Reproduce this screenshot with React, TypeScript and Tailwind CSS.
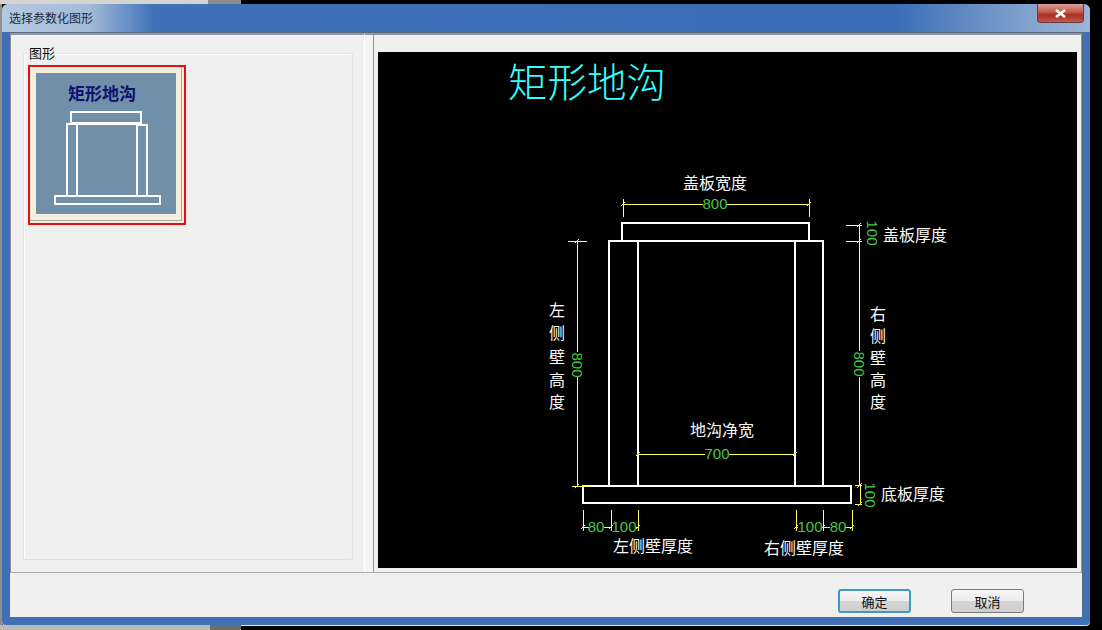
const cjk = "[font-family:'Noto_Sans_CJK_SC','Liberation_Sans',sans-serif]";
const label = "fill-white text-[16px] opacity-[.99] [font-family:'Noto_Sans_CJK_SC',sans-serif]";
const digit = "fill-[#45c745] text-[15px] [font-family:'Liberation_Sans',sans-serif]";

// yellow dimension segments, page coordinates: x1 y1 x2 y2
const DIM_LINES = [
  [623, 199, 623, 217], [809, 199, 809, 217], [623, 204, 703, 204], [727, 204, 809, 204],
  [846, 225, 862, 225], [846, 241, 862, 241], [859, 225, 859, 351], [859, 377, 859, 486],
  [568, 241, 587, 241], [577, 241, 577, 352], [577, 377, 577, 486], [572, 486, 590, 486],
  [638, 454, 705, 454], [729, 454, 795, 454],
  [855, 485, 862, 485], [855, 504, 862, 504], [860, 485, 860, 504],
  [583, 510, 583, 531], [611, 510, 611, 531], [638, 510, 638, 531],
  [796, 510, 796, 531], [823, 510, 823, 531], [852, 510, 852, 531],
  [583, 527, 589, 527], [604, 527, 611, 527], [636, 527, 638, 527],
  [796, 527, 798, 527], [823, 527, 830, 527], [845, 527, 852, 527],
];

// little slanted ticks at dimension ends
const TICKS = [
  [623, 204], [809, 204], [859, 225], [859, 241], [577, 241], [577, 486], [859, 486], [638, 454], [795, 454],
  [860, 485], [860, 504], [583, 527], [611, 527], [638, 527], [796, 527], [823, 527], [852, 527],
];

const LEFT_HEIGHT = [["左", 316], ["侧", 339], ["壁", 363], ["高", 386], ["度", 408]] as const;
const RIGHT_HEIGHT = [["右", 320], ["侧", 342], ["壁", 364], ["高", 386], ["度", 408]] as const;

function Thumbnail() {
  return (
    <div className="h-[160px] w-[158px] border-2 border-[#e01010] bg-[#f3eedd]">
      <div className="h-[154px] w-[152px] border-r border-b border-[#a8a89c] p-[6px]">
        <div className="flex h-[141px] w-[140px] flex-col items-center bg-[#6f90a8]">
          <div className={`mt-[8px] h-[24px] pr-[8px] text-[17px] font-bold leading-[24px] text-[#10106e] ${cjk}`}>矩形地沟</div>
          <svg width="140" height="100" viewBox="36 106 140 100" fill="none" stroke="#fff" strokeWidth="2">
            <rect x="71" y="113" width="70" height="11" />
            <path d="M67 197V125H137M77 125V197M137 125V197M147 197V126H137" />
            <rect x="55" y="197" width="105" height="8" />
          </svg>
        </div>
      </div>
    </div>
  );
}

function Drawing() {
  return (
    <svg width="699" height="516" viewBox="378 52 699 516" className="block bg-black">
      <text x="508" y="97" className={`fill-[#33ffff] text-[39.5px] font-light ${cjk}`}>矩形地沟</text>

      <g fill="none" stroke="#fff" strokeWidth="2">
        <path d="M622 241V223H809V241" />
        <path d="M609 486V241H823V486M638 241V486M795 241V486" />
        <rect x="583" y="486" width="268" height="17" />
      </g>

      <g stroke="#ffff66" strokeWidth="1" shapeRendering="crispEdges">
        {DIM_LINES.map(([x1, y1, x2, y2]) => (
          <line key={`${x1}-${y1}-${x2}-${y2}`} x1={x1} y1={y1} x2={x2} y2={y2} />
        ))}
      </g>
      <g stroke="#ffff66" strokeWidth="1">
        {TICKS.map(([x, y]) => (
          <line key={`${x}-${y}`} x1={x - 2} y1={y + 2} x2={x + 2} y2={y - 2} />
        ))}
      </g>

      <text x="715" y="209" textAnchor="middle" className={digit}>800</text>
      <text x="717" y="459" textAnchor="middle" className={digit}>700</text>
      <text x="596" y="532" textAnchor="middle" className={digit}>80</text>
      <text x="624" y="532" textAnchor="middle" className={digit}>100</text>
      <text x="810" y="532" textAnchor="middle" className={digit}>100</text>
      <text x="838" y="532" textAnchor="middle" className={digit}>80</text>
      <text transform="translate(572 365) rotate(90)" textAnchor="middle" className={digit}>800</text>
      <text transform="translate(854 364) rotate(90)" textAnchor="middle" className={digit}>800</text>
      <text transform="translate(867 233) rotate(90)" textAnchor="middle" className={digit}>100</text>
      <text transform="translate(865 495) rotate(90)" textAnchor="middle" className={digit}>100</text>

      <text x="683" y="189" className={label}>盖板宽度</text>
      <text x="883" y="241" className={label}>盖板厚度</text>
      <text x="690" y="436" className={label}>地沟净宽</text>
      <text x="881" y="500" className={label}>底板厚度</text>
      <text x="613" y="552" className={label}>左侧壁厚度</text>
      <text x="764" y="554" className={label}>右侧壁厚度</text>
      {LEFT_HEIGHT.map(([ch, y]) => (
        <text key={y} x="549" y={y} className={label}>{ch}</text>
      ))}
      {RIGHT_HEIGHT.map(([ch, y]) => (
        <text key={y} x="870" y={y} className={label}>{ch}</text>
      ))}
    </svg>
  );
}

export default function App() {
  return (
    <div className="h-[630px] w-[1102px] overflow-hidden bg-black">
      <div className="flex h-[4px]">
        <div className="w-[208px] bg-[#d4d4d0]" />
        <div className="w-[33px] bg-[#8d8d8d]" />
      </div>

      <div className="flex h-[621px]">
        <div className="w-[2px] bg-[#8f8f8c]" />
        <div className="flex h-[621px] w-[1088px] flex-col rounded-t-[6px] rounded-b-[4px] bg-[#3f70b8] px-[7px] pb-[7px] shadow-[0_1px_0_#dfe6ef]">
          <div className="relative -mx-[7px] h-[28px] shrink-0 rounded-t-[6px] bg-[linear-gradient(90deg,#b4c8e0_0%,#a3bbd9_8%,#3f70b8_14%,#3a6db6_82%,#86a5cf_95%,#9ab4d8_100%)]">
            <div className={`pl-[7px] pt-[5px] text-[12px] leading-[17px] text-[#1c2a3c] ${cjk}`}>选择参数化图形</div>
            <div className="absolute right-[6px] top-0 flex h-[19px] w-[47px] items-center justify-center rounded-b-[4px] border border-t-0 border-[#6a3a40] bg-[linear-gradient(180deg,#d9a09a_0%,#c4584c_45%,#a82e22_60%,#c4584c_100%)]">
              <svg width="11" height="9" viewBox="0 0 11 9" fill="none" stroke="#fff" strokeWidth="2.6">
                <path d="M1 1L10 8M10 1L1 8" />
              </svg>
            </div>
          </div>

          <div className="flex min-h-0 flex-1 flex-col border border-[#5a6a7e] bg-[#f0f0f0]">
            <div className="flex h-[540px] border-b border-b-[#a9a9a9]">
              <div className="h-full w-[354px] border-t-2 border-l border-t-[#8d99a6] border-l-[#8a8f96] pl-[12px] pt-[18px]">
                <div className="relative h-[507px] w-[330px] rounded-[2px] border border-[#e0e2e5] pl-[4px] pt-[11px] shadow-[inset_1px_1px_0_#fff]">
                  <div className={`absolute -top-[9px] left-[4px] bg-[#f0f0f0] px-px text-[13px] leading-[16px] text-[#111] ${cjk}`}>图形</div>
                  <Thumbnail />
                </div>
              </div>

              <div className="h-full w-[9px] border-t-2 border-l border-t-[#8d99a6] border-l-white bg-[#f4f4f4]" />

              <div className="h-full flex-1 border-x border-y-2 border-b-0 border-[#8d949c] bg-[#f0f0f0] pl-[4px] pt-[17px]">
                <Drawing />
              </div>
            </div>

            <div className="flex flex-1 items-start bg-[#f0f0f0] pl-[828px] pt-[16px]">
              <button className={`h-[24px] w-[73px] rounded-[3px] border-2 border-[#3f9ac2] bg-[linear-gradient(180deg,#f6f6f6_0%,#ececec_48%,#d4d4d4_52%,#cfcfcf_100%)] text-[13px] leading-none text-[#111] ${cjk}`}>
                确定
              </button>
              <button className={`ml-[40px] h-[24px] w-[73px] rounded-[3px] border border-[#7a7a7a] bg-[linear-gradient(180deg,#f6f6f6_0%,#ececec_48%,#d4d4d4_52%,#cfcfcf_100%)] text-[13px] leading-none text-[#111] ${cjk}`}>
                取消
              </button>
            </div>
          </div>
        </div>
      </div>

      <div className="flex h-[5px]">
        <div className="w-[210px] bg-[#b9b9b5]" />
        <div className="w-[31px] bg-[#6d6d6d]" />
      </div>
    </div>
  );
}
